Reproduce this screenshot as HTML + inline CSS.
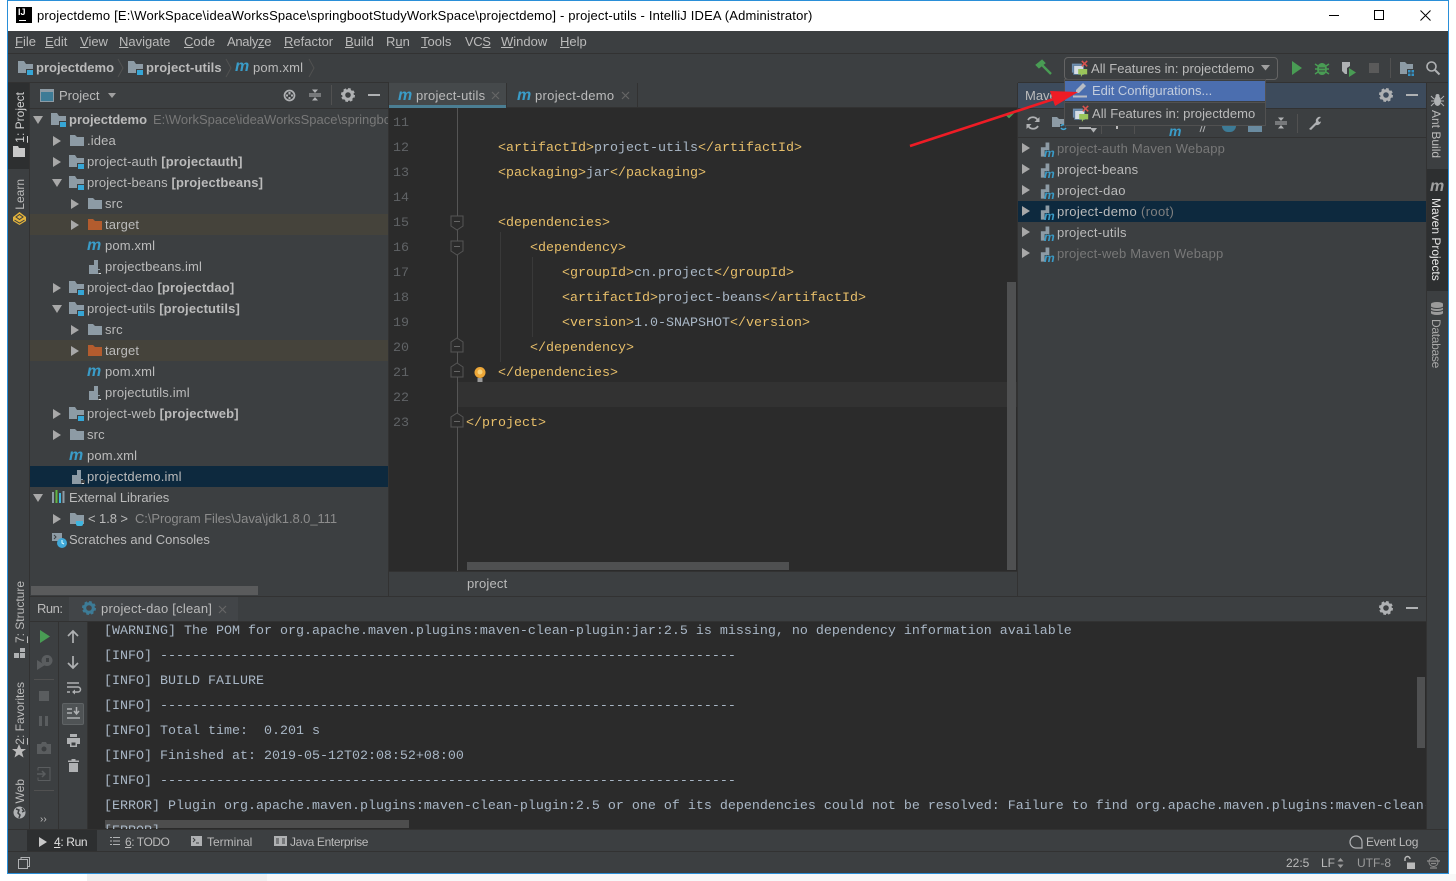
<!DOCTYPE html>
<html><head><meta charset="utf-8"><title>IntelliJ IDEA</title>
<style>
html,body{margin:0;padding:0;background:#fff}
body{width:1456px;height:881px;position:relative;overflow:hidden;font:13px "Liberation Sans","Noto Sans CJK SC",sans-serif;color:#bbb}
div,span.a,svg.a{position:absolute}
.t{position:absolute;white-space:nowrap;line-height:16px;height:16px}
.b{font-weight:bold}
.g{color:#787878}
.m{position:absolute;font:italic bold 16px/16px "Liberation Sans",sans-serif;color:#3a9cc8;height:16px}
.r{position:absolute;left:0;width:100%;height:21px}
.c{position:absolute;white-space:pre;font:13.333px/25px "Liberation Mono",monospace;color:#a9b7c6;height:25px}
.c i{font-style:normal;color:#e8bf6a}
.e{margin-top:2px}
#con .c{margin-top:1px}
#tree .t{margin-top:1px;letter-spacing:.15px}
#tree .m{margin-top:1px}
.mvn .t{letter-spacing:.2px}
.mi{position:absolute;font:italic bold 12px/11px "Liberation Sans",sans-serif;color:#3a9cc8;height:11px}
.n{position:absolute;left:393px;margin-top:2px;font:13.333px/25px "Liberation Mono",monospace;color:#606366;height:25px}
.v{position:absolute;white-space:nowrap;writing-mode:vertical-rl;font-size:12px;line-height:14px;color:#bbb}
.up{transform:rotate(180deg)}
u{text-decoration:underline}
svg{position:absolute;overflow:visible}
</style></head><body>
<svg width="0" height="0" style="position:absolute">
<symbol id="mf" viewBox="0 0 16 16"><path d="M0 1h6l2 3h7v9H0z" fill="#8d9ba5"/><path d="M8 9h8v7H8z" fill="#3c3f41"/><path d="M9 10h6v5H9z" fill="#36a6d6"/></symbol>
<symbol id="f" viewBox="0 0 16 16"><path d="M1 2h5l2 2h7v9H1z" fill="#8d9ba5"/></symbol>
<symbol id="fo" viewBox="0 0 16 16"><path d="M1 2h5l2 2h7v9H1z" fill="#b35c2e"/></symbol>
<symbol id="doc" viewBox="0 0 16 16"><path d="M7 1h4v9h2v5H2V6h5z" fill="#8d9ba5"/><path d="M11 11h4v4h-4z" fill="#3c3f41"/><path d="M11.500 14h2.500v1h-2.500z" fill="#ddd"/></symbol>
<symbol id="mv" viewBox="0 0 16 16"><path d="M7 0h4v8h-5v7H2V5h5z" fill="#8d9ba5"/></symbol>
<symbol id="cfg" viewBox="0 0 20 20"><path d="M1 4h11v10H1z" fill="#6f8fb0"/><path d="M3 6h11v10H3z" fill="#d6dde4" stroke="#5a7c9c"/><path d="M8 10h10v6h-5l-2 3v-3H8z" fill="#9ac45a"/><path d="M12 1l6 6M18 1l-6 6" stroke="#d9534f" stroke-width="1.700"/></symbol>
<symbol id="gear" viewBox="0 0 14 14"><circle cx="7" cy="7" r="4.300" fill="none" stroke="#afb1b3" stroke-width="3"/><circle cx="7" cy="7" r="6" fill="none" stroke="#afb1b3" stroke-width="2" stroke-dasharray="2.700 2"/></symbol>
<symbol id="fold" viewBox="0 0 14 16"><path d="M1 1h12v10l-6 4-6-4z" fill="#2b2b2b" stroke="#555"/><path d="M4 6.500h6" stroke="#666"/></symbol>
<symbol id="foldu" viewBox="0 0 14 16"><path d="M1 15h12V5L7 1 1 5z" fill="#2b2b2b" stroke="#555"/><path d="M4 9.500h6" stroke="#666"/></symbol>
<symbol id="rt" viewBox="0 0 10 10"><path d="M1 0l8 5-8 5z" fill="#a8a8a8"/></symbol>
<symbol id="dn" viewBox="0 0 10 10"><path d="M0 1h10L5 9z" fill="#a8a8a8"/></symbol>
<symbol id="col" viewBox="0 0 14 14"><path d="M1 6h12M1 8h12" stroke="#afb1b3"/><path d="M7 5L4 1.500h6zM7 9l-3 3.500h6z" fill="#afb1b3"/></symbol>
</svg>

<!-- window -->
<div style="left:7px;top:0;width:1442px;height:874px;background:#3c3f41"></div>
<div style="left:87px;top:874px;width:180px;height:7px;background:#f0f0f0"></div>
<div style="left:267px;top:874px;width:1189px;height:7px;background:#f8f8f8"></div>
<div style="left:7px;top:0;width:1442px;height:31px;background:#fff"></div>
<div style="left:7px;top:0;width:1442px;height:1px;background:#2a8fd8"></div>
<div style="left:7px;top:0;width:1px;height:874px;background:#2a8fd8"></div>
<div style="left:1448px;top:0;width:1px;height:874px;background:#2a8fd8"></div>
<div style="left:7px;top:873px;width:1442px;height:1px;background:#2a8fd8"></div>

<!-- title bar -->
<div style="left:16px;top:7px;width:16px;height:16px;background:#000"></div>
<div class="t b" style="left:18px;top:7px;font-size:9px;line-height:11px;height:11px;color:#fff">IJ</div>
<div style="left:19px;top:20px;width:7px;height:1px;background:#fff"></div>
<div class="t" style="left:37px;top:8px;color:#000;letter-spacing:.162px">projectdemo [E:\WorkSpace\ideaWorksSpace\springbootStudyWorkSpace\projectdemo] - project-utils - IntelliJ IDEA (Administrator)</div>
<div style="left:1329px;top:15px;width:10px;height:1px;background:#000"></div>
<div style="left:1374px;top:10px;width:8px;height:8px;border:1px solid #000"></div>
<svg style="left:1420px;top:10px" width="11" height="11"><path d="M.5.5l10 10M10.500.5l-10 10" stroke="#000"/></svg>

<!-- menu -->
<div style="left:8px;top:53px;width:1440px;height:1px;background:#323232"></div>
<div class="t" style="left:15px;top:34px"><u>F</u>ile</div>
<div class="t" style="left:45px;top:34px"><u>E</u>dit</div>
<div class="t" style="left:80px;top:34px"><u>V</u>iew</div>
<div class="t" style="left:119px;top:34px"><u>N</u>avigate</div>
<div class="t" style="left:184px;top:34px"><u>C</u>ode</div>
<div class="t" style="left:227px;top:34px;letter-spacing:-.3px">Analy<u>z</u>e</div>
<div class="t" style="left:284px;top:34px"><u>R</u>efactor</div>
<div class="t" style="left:345px;top:34px"><u>B</u>uild</div>
<div class="t" style="left:386px;top:34px">R<u>u</u>n</div>
<div class="t" style="left:421px;top:34px"><u>T</u>ools</div>
<div class="t" style="left:465px;top:34px;letter-spacing:-.4px">VC<u>S</u></div>
<div class="t" style="left:501px;top:34px"><u>W</u>indow</div>
<div class="t" style="left:560px;top:34px"><u>H</u>elp</div>

<!-- nav bar -->
<div style="left:8px;top:82px;width:1440px;height:1px;background:#323232"></div>
<svg style="left:18px;top:60px" width="16" height="16"><use href="#mf"/></svg>
<div class="t b" style="left:36px;top:60px">projectdemo</div>
<svg style="left:117px;top:59px" width="7" height="18"><path d="M1 0l5 9-5 9" fill="none" stroke="#515151"/></svg>
<svg style="left:128px;top:60px" width="16" height="16"><use href="#mf"/></svg>
<div class="t b" style="left:146px;top:60px;letter-spacing:.1px">project-utils</div>
<svg style="left:225px;top:59px" width="7" height="18"><path d="M1 0l5 9-5 9" fill="none" stroke="#515151"/></svg>
<div class="m" style="left:235px;top:59px">m</div>
<div class="t" style="left:253px;top:60px;letter-spacing:.15px">pom.xml</div>
<svg style="left:308px;top:59px" width="7" height="18"><path d="M1 0l5 9-5 9" fill="none" stroke="#515151"/></svg>

<svg style="left:1036px;top:60px" width="17" height="15"><path d="M1 5l5-4 2 2-5 4zM6 5l9 9" fill="#499c54" stroke="#499c54" stroke-width="2.400"/></svg>
<div style="left:1064px;top:57px;width:212px;height:21px;border:1px solid #646464;border-radius:4px"></div>
<svg style="left:1071px;top:60px" width="18" height="18"><use href="#cfg"/></svg>
<div class="t" style="left:1091px;top:61px;letter-spacing:.05px">All Features in: projectdemo</div>
<svg style="left:1261px;top:65px" width="9" height="6"><path d="M0 0h9L4.500 5.500z" fill="#a0a0a0"/></svg>
<svg style="left:1291px;top:61px" width="12" height="14"><path d="M1 0l10 7-10 7z" fill="#499c54"/></svg>
<svg style="left:1315px;top:61px" width="14" height="14"><ellipse cx="7" cy="8" rx="5" ry="6" fill="#499c54"/><path d="M0 3l3 2M14 3l-3 2M0 8h3M14 8h-3M0 13l3-2M14 13l-3-2" stroke="#499c54" stroke-width="1.500"/><path d="M4 7h6M4 10h6" stroke="#3c3f41"/></svg>
<svg style="left:1341px;top:61px" width="16" height="16"><path d="M1 1h8v4l-3 2v6H4l-3-3z" fill="#afb1b3"/><path d="M8 7l7 4.500-7 4.500z" fill="#499c54"/></svg>
<div style="left:1369px;top:63px;width:10px;height:10px;background:#5a5a5a"></div>
<div style="left:1390px;top:58px;width:1px;height:20px;background:#515151"></div>
<svg style="left:1399px;top:61px" width="16" height="15"><path d="M1 1h5l2 2h6v10H1z" fill="#8d9ba5"/><path d="M8 8h7v7H8z" fill="#3c3f41"/><path d="M9 9h2.500v2.500H9zM12.500 9H15v2.500h-2.500zM9 12.500h2.500V15H9zM12.500 12.500H15V15h-2.500z" fill="#3592c4"/></svg>
<svg style="left:1426px;top:61px" width="14" height="14"><circle cx="5.500" cy="5.500" r="4.500" fill="none" stroke="#afb1b3" stroke-width="1.600"/><path d="M9 9l4.500 4.500" stroke="#afb1b3" stroke-width="2"/></svg>

<!-- left strip -->
<div style="left:8px;top:83px;width:21px;height:746px;background:#3c3f41"></div>
<div style="left:8px;top:83px;width:21px;height:86px;background:#2d2f30"></div>
<div style="left:29px;top:83px;width:1px;height:746px;background:#323232"></div>
<div class="v up" style="left:13px;top:92px;color:#d0d0d0"><u>1</u>: Project</div>
<svg style="left:13px;top:146px" width="12" height="11"><path d="M0 0h5l1 2h6v9H0z" fill="#c8c8c8"/></svg>
<div class="v up" style="left:13px;top:179px">Learn</div>
<svg style="left:13px;top:212px" width="13" height="13"><path d="M6.500 0L13 5v4L6.500 13 0 9V5z" fill="#e2b33c"/><path d="M3 5l3.500-2.500L10 5 6.500 7.500zM1.500 8l5 3 5-3" fill="none" stroke="#3c3f41"/></svg>
<div class="v up" style="left:13px;top:581px"><u>7</u>: Structure</div>
<svg style="left:14px;top:648px" width="12" height="10"><path d="M6 0h5v4H6zM0 5h5v5H0zM6 5h5v5H6z" fill="#afb1b3"/></svg>
<div class="v up" style="left:13px;top:682px"><u>2</u>: Favorites</div>
<svg style="left:12px;top:744px" width="14" height="14"><path d="M7 0l2 5h5l-4 3 1.500 5.500L7 10.500 2.500 13.500 4 8 0 5h5z" fill="#bbb"/></svg>
<div class="v up" style="left:13px;top:779px">Web</div>
<svg style="left:13px;top:806px" width="13" height="13"><circle cx="6.500" cy="6.500" r="6" fill="#afb1b3"/><path d="M3 3l3 1-1 3 2 2-1 3M9 2l2 3-2 1" stroke="#3c3f41" fill="none" stroke-width="1.500"/></svg>

<!-- project panel -->
<div style="left:30px;top:83px;width:358px;height:25px;background:#3c3f41;border-bottom:1px solid #323232"></div>
<svg style="left:40px;top:89px" width="14" height="13"><path d="M.5.500h13v12H.500z" fill="#3d7b96" stroke="#8d9ba5"/><path d="M1 1h12v2H1z" fill="#8d9ba5"/></svg>
<div class="t" style="left:59px;top:88px">Project</div>
<svg style="left:108px;top:93px" width="8" height="5"><path d="M0 0h8L4 5z" fill="#a0a0a0"/></svg>
<svg style="left:283px;top:89px" width="13" height="13"><circle cx="6.500" cy="6.500" r="5" fill="none" stroke="#afb1b3" stroke-width="1.700"/><path d="M5.500 3h2v2.500h-2zM5.500 8h2v2h-2zM3 5.500h2v2H3zM8 5.500h2v2H8z" fill="#afb1b3"/></svg>
<svg style="left:308px;top:88px" width="14" height="14"><use href="#col"/></svg>
<div style="left:331px;top:85px;width:1px;height:20px;background:#515151"></div>
<svg style="left:341px;top:88px" width="14" height="14"><use href="#gear"/></svg>
<div style="left:368px;top:94px;width:12px;height:2px;background:#afb1b3"></div>

<div style="left:30px;top:214px;width:358px;height:21px;background:#45433b"></div>
<div style="left:30px;top:340px;width:358px;height:21px;background:#45433b"></div>
<div style="left:30px;top:466px;width:358px;height:21px;background:#0d293e"></div>

<div id="tree" style="left:31px;top:109px;width:357px;height:488px;overflow:hidden">
<svg style="left:2px;top:6px" width="10" height="10"><use href="#dn"/></svg><svg style="left:20px;top:3px" width="16" height="16"><use href="#mf"/></svg>
<div class="t b" style="left:38px;top:2px;letter-spacing:0!important">projectdemo</div><div class="t g" style="left:122px;top:2px;letter-spacing:0!important">E:\WorkSpace\ideaWorksSpace\springbootStudyWorkSpace</div>

<svg style="left:21px;top:27px" width="10" height="10"><use href="#rt"/></svg><svg style="left:38px;top:24px" width="16" height="16"><use href="#f"/></svg><div class="t" style="left:56px;top:23px">.idea</div>
<svg style="left:21px;top:48px" width="10" height="10"><use href="#rt"/></svg><svg style="left:38px;top:45px" width="16" height="16"><use href="#mf"/></svg><div class="t" style="left:56px;top:44px">project-auth <span class="b">[projectauth]</span></div>
<svg style="left:21px;top:69px" width="10" height="10"><use href="#dn"/></svg><svg style="left:38px;top:66px" width="16" height="16"><use href="#mf"/></svg><div class="t" style="left:56px;top:65px">project-beans <span class="b">[projectbeans]</span></div>
<svg style="left:39px;top:90px" width="10" height="10"><use href="#rt"/></svg><svg style="left:56px;top:87px" width="16" height="16"><use href="#f"/></svg><div class="t" style="left:74px;top:86px">src</div>
<svg style="left:39px;top:111px" width="10" height="10"><use href="#rt"/></svg><svg style="left:56px;top:108px" width="16" height="16"><use href="#fo"/></svg><div class="t" style="left:74px;top:107px">target</div>
<div class="m" style="left:56px;top:128px">m</div><div class="t" style="left:74px;top:128px">pom.xml</div>
<svg style="left:56px;top:150px" width="16" height="16"><use href="#doc"/></svg><div class="t" style="left:74px;top:149px">projectbeans.iml</div>
<svg style="left:21px;top:174px" width="10" height="10"><use href="#rt"/></svg><svg style="left:38px;top:171px" width="16" height="16"><use href="#mf"/></svg><div class="t" style="left:56px;top:170px">project-dao <span class="b">[projectdao]</span></div>
<svg style="left:21px;top:195px" width="10" height="10"><use href="#dn"/></svg><svg style="left:38px;top:192px" width="16" height="16"><use href="#mf"/></svg><div class="t" style="left:56px;top:191px">project-utils <span class="b">[projectutils]</span></div>
<svg style="left:39px;top:216px" width="10" height="10"><use href="#rt"/></svg><svg style="left:56px;top:213px" width="16" height="16"><use href="#f"/></svg><div class="t" style="left:74px;top:212px">src</div>
<svg style="left:39px;top:237px" width="10" height="10"><use href="#rt"/></svg><svg style="left:56px;top:234px" width="16" height="16"><use href="#fo"/></svg><div class="t" style="left:74px;top:233px">target</div>
<div class="m" style="left:56px;top:254px">m</div><div class="t" style="left:74px;top:254px">pom.xml</div>
<svg style="left:56px;top:276px" width="16" height="16"><use href="#doc"/></svg><div class="t" style="left:74px;top:275px">projectutils.iml</div>
<svg style="left:21px;top:300px" width="10" height="10"><use href="#rt"/></svg><svg style="left:38px;top:297px" width="16" height="16"><use href="#mf"/></svg><div class="t" style="left:56px;top:296px">project-web <span class="b">[projectweb]</span></div>
<svg style="left:21px;top:321px" width="10" height="10"><use href="#rt"/></svg><svg style="left:38px;top:318px" width="16" height="16"><use href="#f"/></svg><div class="t" style="left:56px;top:317px">src</div>
<div class="m" style="left:38px;top:338px">m</div><div class="t" style="left:56px;top:338px">pom.xml</div>
<svg style="left:39px;top:360px" width="16" height="16"><use href="#doc"/></svg><div class="t" style="left:56px;top:359px;letter-spacing:.2px">projectdemo.iml</div>
<svg style="left:2px;top:384px" width="10" height="10"><use href="#dn"/></svg>
<svg style="left:20px;top:381px" width="15" height="14"><path d="M1 2h2v11H1z" fill="#8d9ba5"/><path d="M4.500 0h2v13h-2z" fill="#62b543"/><path d="M8 3h2v10H8z" fill="#40b6e0"/><path d="M11.500 1h2v12h-2z" fill="#8d9ba5"/></svg>
<div class="t" style="left:38px;top:380px;letter-spacing:-.05px">External Libraries</div>
<svg style="left:21px;top:405px" width="10" height="10"><use href="#rt"/></svg>
<svg style="left:38px;top:402px" width="16" height="16"><use href="#f"/><path d="M7 10h7v3a2 2 0 0 1-2 2H9a2 2 0 0 1-2-2z" fill="#40b6e0"/></svg>
<div class="t" style="left:57px;top:401px;letter-spacing:-.08px">&lt; 1.8 &gt;&nbsp; <span class="g" style="color:#8c8c8c">C:\Program Files\Java\jdk1.8.0_111</span></div>
<svg style="left:20px;top:423px" width="16" height="16"><path d="M1 1h10v8H1z" fill="#8d9ba5"/><path d="M3 3l2 2-2 2" stroke="#3c3f41" fill="none"/><circle cx="11" cy="11" r="5" fill="#40a8d8"/><path d="M11 8v3l2 1" stroke="#dff" fill="none"/></svg>
<div class="t" style="left:38px;top:422px;letter-spacing:0">Scratches and Consoles</div>

<div style="left:0;top:477px;width:227px;height:9px;background:#5a5b5c"></div>
</div>
<div style="left:388px;top:83px;width:1px;height:513px;background:#323232"></div>

<!-- editor -->
<div style="left:389px;top:82px;width:629px;height:26px;background:#3c3f41;border-bottom:1px solid #323232;box-sizing:border-box"></div>
<div style="left:389px;top:83px;width:117px;height:22px;background:#45494b"></div>
<div style="left:389px;top:105px;width:117px;height:3px;background:#4b7e93"></div>
<div style="left:637px;top:83px;width:1px;height:24px;background:#323232"></div>
<div style="left:506px;top:83px;width:1px;height:25px;background:#323232"></div>
<div class="m" style="left:398px;top:88px">m</div><div class="t" style="left:416px;top:88px;letter-spacing:.22px">project-utils</div>
<svg style="left:491px;top:91px" width="9" height="9"><path d="M1 1l7 7M8 1L1 8" stroke="#666" stroke-width="1.200"/></svg>
<div class="m" style="left:517px;top:88px">m</div><div class="t" style="left:535px;top:88px;letter-spacing:.3px">project-demo</div>
<svg style="left:621px;top:91px" width="9" height="9"><path d="M1 1l7 7M8 1L1 8" stroke="#666" stroke-width="1.200"/></svg>

<div style="left:389px;top:108px;width:628px;height:463px;background:#2b2b2b"></div>
<div style="left:458px;top:382px;width:559px;height:25px;background:#323232"></div>
<div style="left:457px;top:108px;width:1px;height:463px;background:#555"></div>
<div style="left:500px;top:232px;width:1px;height:130px;background:#393939"></div>
<div style="left:532px;top:257px;width:1px;height:80px;background:#393939"></div>
<div class="n" style="top:109px">11</div><div class="n" style="top:134px">12</div><div class="n" style="top:159px">13</div><div class="n" style="top:184px">14</div><div class="n" style="top:209px">15</div><div class="n" style="top:234px">16</div><div class="n" style="top:259px">17</div><div class="n" style="top:284px">18</div><div class="n" style="top:309px">19</div><div class="n" style="top:334px">20</div><div class="n" style="top:359px">21</div><div class="n" style="top:384px">22</div><div class="n" style="top:409px">23</div>
<svg style="left:450px;top:215px" width="14" height="16"><use href="#fold"/></svg>
<svg style="left:450px;top:240px" width="14" height="16"><use href="#fold"/></svg>
<svg style="left:450px;top:337px" width="14" height="16"><use href="#foldu"/></svg>
<svg style="left:450px;top:362px" width="14" height="16"><use href="#foldu"/></svg>
<svg style="left:450px;top:412px" width="14" height="16"><use href="#foldu"/></svg>
<svg style="left:474px;top:367px" width="12" height="16"><circle cx="6" cy="5.500" r="5.500" fill="#eda738"/><circle cx="6" cy="5" r="2.500" fill="#f7d27a"/><path d="M3.500 11h5v4h-5z" fill="#9a9a9a"/></svg>

<div class="c e" style="left:498px;top:134px"><i>&lt;artifactId&gt;</i>project-utils<i>&lt;/artifactId&gt;</i></div>
<div class="c e" style="left:498px;top:159px"><i>&lt;packaging&gt;</i>jar<i>&lt;/packaging&gt;</i></div>
<div class="c e" style="left:498px;top:209px"><i>&lt;dependencies&gt;</i></div>
<div class="c e" style="left:530px;top:234px"><i>&lt;dependency&gt;</i></div>
<div class="c e" style="left:562px;top:259px"><i>&lt;groupId&gt;</i>cn.project<i>&lt;/groupId&gt;</i></div>
<div class="c e" style="left:562px;top:284px"><i>&lt;artifactId&gt;</i>project-beans<i>&lt;/artifactId&gt;</i></div>
<div class="c e" style="left:562px;top:309px"><i>&lt;version&gt;</i>1.0-SNAPSHOT<i>&lt;/version&gt;</i></div>
<div class="c e" style="left:530px;top:334px"><i>&lt;/dependency&gt;</i></div>
<div class="c e" style="left:498px;top:359px"><i>&lt;/dependencies&gt;</i></div>
<div class="c e" style="left:466px;top:409px"><i>&lt;/project&gt;</i></div>

<div style="left:1007px;top:282px;width:9px;height:288px;background:#4f5051"></div>
<div style="left:467px;top:562px;width:322px;height:8px;background:#4f5051"></div>
<svg style="left:1005px;top:110px" width="11" height="9"><path d="M1 4l3 3 6-6" fill="none" stroke="#499c54" stroke-width="2"/></svg>
<div style="left:389px;top:571px;width:629px;height:25px;background:#3c3f41;border-top:1px solid #323232;box-sizing:border-box"></div>
<div class="t" style="left:467px;top:576px;letter-spacing:.2px">project</div>
<div style="left:1017px;top:83px;width:1px;height:513px;background:#323232"></div>

<!-- maven panel -->
<div style="left:1018px;top:83px;width:408px;height:25px;background:#3d4b5c"></div>
<div class="t" style="left:1025px;top:88px">Maven</div>
<svg style="left:1379px;top:88px" width="14" height="14"><use href="#gear"/></svg>
<div style="left:1406px;top:94px;width:12px;height:2px;background:#afb1b3"></div>
<div style="left:1018px;top:108px;width:408px;height:1px;background:#323232"></div>
<div style="left:1018px;top:137px;width:408px;height:1px;background:#323232"></div>
<svg style="left:1026px;top:116px" width="14" height="14"><path d="M12 5a5.500 5.500 0 0 0-10-1M2 9a5.500 5.500 0 0 0 10 1" fill="none" stroke="#afb1b3" stroke-width="1.800"/><path d="M13.500 1v5h-5zM.5 13V8h5z" fill="#afb1b3"/></svg>
<svg style="left:1052px;top:116px" width="16" height="14"><path d="M0 1h5l2 2h6v8H0z" fill="#8d9ba5"/><path d="M8 8h7v6H8z" fill="#3c3f41"/><path d="M9 10a3 3 0 0 1 5 0M14 12a3 3 0 0 1-5 0" fill="none" stroke="#40a8d8" stroke-width="1.500"/></svg>
<svg style="left:1079px;top:126px" width="16" height="7"><path d="M0 2h12M13 3h3l-1.500 2z" stroke="#afb1b3" stroke-width="2" fill="#afb1b3"/></svg>
<div style="left:1101px;top:126px;width:1px;height:8px;background:#515151"></div>
<div style="left:1116px;top:126px;width:2px;height:3px;background:#bbb"></div>
<div style="left:1134px;top:126px;width:1px;height:8px;background:#515151"></div>
<div class="m" style="left:1169px;top:123px;font-size:14px">m</div>
<svg style="left:1200px;top:126px" width="6" height="6"><path d="M2 0L0 6M5 0L3 6" stroke="#afb1b3"/></svg>
<div style="left:1222px;top:126px;width:14px;height:6px;background:#3d7b96;border-radius:0 0 7px 7px"></div>
<div style="left:1248px;top:126px;width:14px;height:6px;background:#6a8ba0"></div>
<svg style="left:1274px;top:116px" width="14" height="14"><use href="#col"/></svg>
<div style="left:1297px;top:114px;width:1px;height:19px;background:#515151"></div>
<svg style="left:1307px;top:115px" width="15" height="16"><path d="M2 14L9 7a4 4 0 0 1 5-5l-3 3 1 2 2-.500a4 4 0 0 1-5 3.500l-5 5z" fill="#afb1b3"/></svg>

<div style="left:1018px;top:201px;width:408px;height:21px;background:#0d293e"></div>
<div class="mvn" style="left:0;top:0;width:0;height:0">
<svg style="left:1021px;top:143px" width="10" height="10"><use href="#rt"/></svg><svg style="left:1039px;top:142px" width="15" height="16"><use href="#mv"/></svg><div class="mi" style="left:1044px;top:148px">m</div><div class="t g" style="left:1057px;top:141px">project-auth Maven Webapp</div>
<svg style="left:1021px;top:164px" width="10" height="10"><use href="#rt"/></svg><svg style="left:1039px;top:163px" width="15" height="16"><use href="#mv"/></svg><div class="mi" style="left:1044px;top:169px">m</div><div class="t" style="left:1057px;top:162px">project-beans</div>
<svg style="left:1021px;top:185px" width="10" height="10"><use href="#rt"/></svg><svg style="left:1039px;top:184px" width="15" height="16"><use href="#mv"/></svg><div class="mi" style="left:1044px;top:190px">m</div><div class="t" style="left:1057px;top:183px;letter-spacing:.35px">project-dao</div>
<svg style="left:1021px;top:206px" width="10" height="10"><use href="#rt"/></svg><svg style="left:1039px;top:205px" width="15" height="16"><use href="#mv"/></svg><div class="mi" style="left:1044px;top:211px">m</div><div class="t" style="left:1057px;top:204px;letter-spacing:.35px">project-demo <span style="color:#808080">(root)</span></div>
<svg style="left:1021px;top:227px" width="10" height="10"><use href="#rt"/></svg><svg style="left:1039px;top:226px" width="15" height="16"><use href="#mv"/></svg><div class="mi" style="left:1044px;top:232px">m</div><div class="t" style="left:1057px;top:225px;letter-spacing:.25px">project-utils</div>
<svg style="left:1021px;top:248px" width="10" height="10"><use href="#rt"/></svg><svg style="left:1039px;top:247px" width="15" height="16"><use href="#mv"/></svg><div class="mi" style="left:1044px;top:253px">m</div><div class="t g" style="left:1057px;top:246px">project-web Maven Webapp</div>
</div>

<!-- right strip -->
<div style="left:1426px;top:83px;width:1px;height:746px;background:#323232"></div>
<div style="left:1427px;top:169px;width:21px;height:122px;background:#2d2f30"></div>
<svg style="left:1431px;top:93px" width="13" height="14"><ellipse cx="6.500" cy="8" rx="3.500" ry="5" fill="#afb1b3"/><circle cx="6.500" cy="3" r="2" fill="#afb1b3"/><path d="M0 3l3 3M13 3l-3 3M0 8h3M13 8h-3M0 13l3-3M13 13l-3-3" stroke="#afb1b3"/></svg>
<div class="v" style="left:1429px;top:110px">Ant Build</div>
<div class="m" style="left:1430px;top:179px;color:#a0a0a0">m</div>
<div class="v" style="left:1429px;top:198px;color:#e8e8e8">Maven Projects</div>
<svg style="left:1431px;top:302px" width="12" height="13"><path d="M0 2a6 2 0 0 1 12 0v9a6 2 0 0 1-12 0z" fill="#9b9b9b"/><path d="M0 5c2 2 10 2 12 0M0 8c2 2 10 2 12 0" fill="none" stroke="#3c3f41"/></svg>
<div class="v" style="left:1429px;top:319px;color:#a8a8a8;letter-spacing:-.3px">Database</div>

<!-- run panel -->
<div style="left:30px;top:596px;width:1396px;height:1px;background:#323232"></div>
<div style="left:30px;top:597px;width:1396px;height:25px;background:#3c3f41;border-bottom:1px solid #323232;box-sizing:border-box"></div>
<div style="left:69px;top:597px;width:169px;height:24px;background:#424548"></div>
<div class="t" style="left:37px;top:601px;letter-spacing:-.5px">Run:</div>
<svg style="left:82px;top:601px" width="14" height="14"><circle cx="7" cy="7" r="4.300" fill="none" stroke="#3d7b96" stroke-width="3"/><circle cx="7" cy="7" r="6" fill="none" stroke="#3d7b96" stroke-width="2" stroke-dasharray="2.700 2"/></svg>
<div class="t" style="left:101px;top:601px;letter-spacing:.22px">project-dao [clean]</div>
<svg style="left:218px;top:605px" width="9" height="9"><path d="M1 1l7 7M8 1L1 8" stroke="#666" stroke-width="1.200"/></svg>
<svg style="left:1379px;top:601px" width="14" height="14"><use href="#gear"/></svg>
<div style="left:1406px;top:607px;width:12px;height:2px;background:#afb1b3"></div>

<div style="left:58px;top:622px;width:1px;height:208px;background:#323232"></div>
<div style="left:87px;top:622px;width:1339px;height:208px;background:#2b2b2b;overflow:hidden" id="con">
<div class="c" style="left:17px;top:-4px">[WARNING] The POM for org.apache.maven.plugins:maven-clean-plugin:jar:2.5 is missing, no dependency information available</div>
<div class="c" style="left:17px;top:21px">[INFO] ------------------------------------------------------------------------</div>
<div class="c" style="left:17px;top:46px">[INFO] BUILD FAILURE</div>
<div class="c" style="left:17px;top:71px">[INFO] ------------------------------------------------------------------------</div>
<div class="c" style="left:17px;top:96px">[INFO] Total time:  0.201 s</div>
<div class="c" style="left:17px;top:121px">[INFO] Finished at: 2019-05-12T02:08:52+08:00</div>
<div class="c" style="left:17px;top:146px">[INFO] ------------------------------------------------------------------------</div>
<div class="c" style="left:17px;top:171px;width:1322px;overflow:hidden">[ERROR] Plugin org.apache.maven.plugins:maven-clean-plugin:2.5 or one of its dependencies could not be resolved: Failure to find org.apache.maven.plugins:maven-clean-plugin</div>
<div style="left:18px;top:198px;width:304px;height:8px;background:#4d4d4d"></div>
<div class="c" style="left:17px;top:196px">[ERROR]</div>
<div style="left:1330px;top:55px;width:8px;height:71px;background:#4f5051"></div>
</div>
<div style="left:87px;top:622px;width:1px;height:208px;background:#323232"></div>

<svg style="left:39px;top:630px" width="12" height="13"><path d="M1 0l10 6.500L1 13z" fill="#499c54"/></svg>
<svg style="left:37px;top:655px" width="16" height="15"><path d="M0 5l8 5-8 5z" fill="#5a5d5f"/><circle cx="10" cy="5.500" r="5.500" fill="#5a5d5f"/><path d="M9 3h3v4H9z" fill="#3c3f41"/></svg>
<div style="left:34px;top:679px;width:20px;height:1px;background:#515151"></div>
<div style="left:39px;top:691px;width:10px;height:10px;background:#5a5d5f"></div>
<div style="left:39px;top:716px;width:3px;height:10px;background:#5a5d5f"></div><div style="left:45px;top:716px;width:3px;height:10px;background:#5a5d5f"></div>
<svg style="left:37px;top:742px" width="14" height="12"><path d="M0 2h4l1-2h4l1 2h4v10H0z" fill="#5a5d5f"/><circle cx="7" cy="7" r="2.500" fill="#3c3f41"/></svg>
<svg style="left:37px;top:767px" width="14" height="14"><path d="M1 .5h12v13H1M1 .5v3M1 10.500v3" fill="none" stroke="#5a5d5f"/><path d="M0 7h7M5 4l3 3-3 3" fill="none" stroke="#5a5d5f" stroke-width="1.500"/></svg>
<div style="left:34px;top:790px;width:20px;height:1px;background:#515151"></div>
<div class="t" style="left:40px;top:812px;font-size:10px">››</div>

<svg style="left:67px;top:630px" width="12" height="13"><path d="M6 13V2M1 6l5-5 5 5" fill="none" stroke="#afb1b3" stroke-width="1.700"/></svg>
<svg style="left:67px;top:656px" width="12" height="13"><path d="M6 0v11M1 7l5 5 5-5" fill="none" stroke="#afb1b3" stroke-width="1.700"/></svg>
<svg style="left:66px;top:682px" width="14" height="13"><path d="M1 1h12M1 5h11a2.500 2.500 0 0 1 0 5H8M1 10h3" fill="none" stroke="#afb1b3" stroke-width="1.500"/><path d="M9 7.500v5L6 10z" fill="#afb1b3"/></svg>
<div style="left:62px;top:703px;width:20px;height:20px;background:#4f5355;border:1px solid #5f6365;border-radius:2px"></div>
<svg style="left:67px;top:707px" width="13" height="13"><path d="M0 2h5M0 6h5M0 11h13" stroke="#afb1b3" stroke-width="1.500"/><path d="M9.500 0v6M7 4l2.500 3L12 4" fill="none" stroke="#afb1b3" stroke-width="1.500"/></svg>
<svg style="left:67px;top:734px" width="13" height="13"><path d="M3 0h7v3H3zM0 4h13v6h-3v3H3v-3H0z" fill="#afb1b3"/><path d="M4.500 8.500h4v3h-4z" fill="#3c3f41"/></svg>
<svg style="left:68px;top:759px" width="11" height="13"><path d="M3.500 0h4v1.500h3.500V3H0V1.500h3.500zM1 4h9v9H1z" fill="#afb1b3"/></svg>

<!-- bottom tool bar -->
<div style="left:8px;top:829px;width:1440px;height:1px;background:#323232"></div>
<div style="left:8px;top:851px;width:1440px;height:1px;background:#323232"></div>
<div style="left:27px;top:830px;width:70px;height:21px;background:#2d2f30"></div>
<svg style="left:39px;top:837px" width="9" height="10"><path d="M0 0l8 5-8 5z" fill="#c8c8c8"/></svg>
<div class="t" style="left:54px;top:834px;font-size:12px;color:#e0e0e0;letter-spacing:-.35px"><u>4</u>: Run</div>
<svg style="left:110px;top:837px" width="10" height="9"><path d="M0 .5h2M3 .5h7M0 4h2M3 4h7M0 7.500h2M3 7.500h7" stroke="#afb1b3"/></svg>
<div class="t" style="left:125px;top:834px;font-size:12px;letter-spacing:-.45px"><u>6</u>: TODO</div>
<div style="left:191px;top:836px;width:11px;height:10px;background:#afb1b3"></div>
<svg style="left:192px;top:837px" width="9" height="8"><path d="M1 1l2 2-2 2M4 6h3" stroke="#3c3f41" fill="none"/></svg>
<div class="t" style="left:207px;top:834px;font-size:12px">Terminal</div>
<div style="left:274px;top:836px;width:13px;height:10px;background:#afb1b3"></div>
<svg style="left:275px;top:838px" width="11" height="6"><path d="M1 1h3M1 3h3M1 5h3M7 1h3M7 3h3M7 5h3" stroke="#3c3f41"/></svg>
<div class="t" style="left:290px;top:834px;font-size:12px;letter-spacing:-.35px">Java Enterprise</div>
<svg style="left:1349px;top:835px" width="14" height="14"><path d="M13 13H6.500A6 6 0 1 1 13 7z" fill="none" stroke="#afb1b3" stroke-width="1.200"/></svg>
<div class="t" style="left:1366px;top:834px;font-size:12px;letter-spacing:-.2px">Event Log</div>

<!-- status -->
<svg style="left:18px;top:857px" width="12" height="12"><path d="M3 2.500V.5h8.500v9H9.500" fill="none" stroke="#afb1b3"/><path d="M.5 2.500h9v9h-9z" fill="none" stroke="#afb1b3"/></svg>
<div class="t" style="left:1286px;top:855px;font-size:12px">22:5</div>
<div class="t" style="left:1321px;top:855px;font-size:12px">LF</div>
<svg style="left:1337px;top:858px" width="7" height="10"><path d="M3.500 0L6.500 3.500h-6zM3.500 10L6.500 6.500h-6z" fill="#9a9a9a"/></svg>
<div class="t" style="left:1357px;top:855px;font-size:12px;color:#9a9a9a">UTF-8</div>
<svg style="left:1403px;top:856px" width="12" height="13"><path d="M2 5V3a2.500 2.500 0 0 1 5 0" fill="none" stroke="#bbb" stroke-width="1.400"/><path d="M4 6.500h8V13H4z" fill="#bbb"/></svg>
<svg style="left:1427px;top:856px" width="13" height="14"><circle cx="6.500" cy="6" r="4.500" fill="none" stroke="#8c8c8c"/><path d="M0 5h13M3 12h7M4 7.500h5" stroke="#8c8c8c" stroke-width="1.300"/></svg>

<!-- popup -->
<div style="left:1064px;top:79px;width:202px;height:47px;background:#3c3f41;border:1px solid #515151;box-sizing:border-box"></div>
<div style="left:1065px;top:81px;width:200px;height:20px;background:#4b6eaf"></div>
<div style="left:1065px;top:102px;width:200px;height:1px;background:#515151"></div>
<svg style="left:1072px;top:83px" width="16" height="15"><path d="M11 0l3 3-7 7H4V7z" fill="#b8bcc4"/><path d="M1 12.500h14v2H1z" fill="#b8bcc4"/></svg>
<div class="t" style="left:1092px;top:83px;color:#c3cddd;letter-spacing:-.02px">Edit Configurations...</div>
<svg style="left:1072px;top:105px" width="18" height="18"><use href="#cfg"/></svg>
<div class="t" style="left:1092px;top:106px;letter-spacing:.05px">All Features in: projectdemo</div>

<!-- red arrow -->
<svg style="left:900px;top:80px" width="190" height="75"><path d="M10 66L160 17" stroke="#ee1c25" stroke-width="2.600"/><path d="M150 11L178 12 155 26z" fill="#ee1c25"/></svg>
</body></html>
